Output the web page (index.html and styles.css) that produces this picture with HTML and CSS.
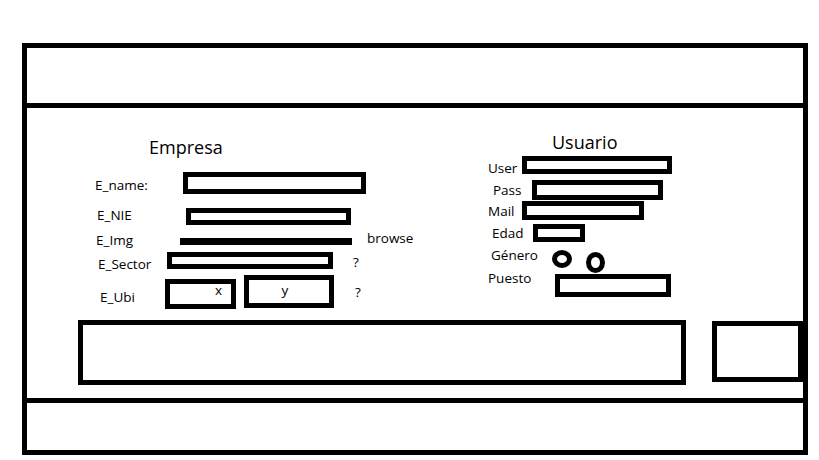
FILE: index.html
```html
<!DOCTYPE html>
<html lang="es">
<head>
<meta charset="utf-8">
<title>Registro</title>
<link rel="stylesheet" href="styles.css">
</head>
<body>
<div class="page">
  <header class="top"></header>
  <main class="main">
    <div class="forms">
      <section class="col col-left">
        <h2 class="title t-empresa">Empresa</h2>
        <div class="row r-name"><span class="label l-name">E_name:</span><span class="box f-name"></span></div>
        <div class="row r-nie"><span class="label l-nie">E_NIE</span><span class="box f-nie"></span></div>
        <div class="row r-img"><span class="label l-img">E_Img</span><span class="bar"></span><span class="label browse">browse</span></div>
        <div class="row r-sector"><span class="label l-sector">E_Sector</span><span class="box f-sector"></span><span class="label q-sector">?</span></div>
        <div class="row r-ubi"><span class="label l-ubi">E_Ubi</span><span class="box f-x">x</span><span class="box f-y">y</span><span class="label q-ubi">?</span></div>
      </section>
      <section class="col col-right">
        <h2 class="title t-usuario">Usuario</h2>
        <div class="row r-user"><span class="label l-user">User</span><span class="box f-user"></span></div>
        <div class="row r-pass"><span class="label l-pass">Pass</span><span class="box f-pass"></span></div>
        <div class="row r-mail"><span class="label l-mail">Mail</span><span class="box f-mail"></span></div>
        <div class="row r-edad"><span class="label l-edad">Edad</span><span class="box f-edad"></span></div>
        <div class="row r-genero"><span class="label l-genero">Género</span><span class="box radio-a"></span><span class="box radio-b"></span></div>
        <div class="row r-puesto"><span class="label l-puesto">Puesto</span><span class="box f-puesto"></span></div>
      </section>
    </div>
    <div class="bottom">
      <div class="box area"></div>
      <div class="box side"></div>
    </div>
  </main>
  <footer class="foot"></footer>
</div>
</body>
</html>
```
FILE: styles.css
```css
html, body {
  margin: 0;
  padding: 0;
  background: #fff;
}
body {
  font-family: "Open Sans", "Noto Sans", sans-serif;
  color: #000;
}
.page {
  margin: 43px 0 0 22px;
  width: 786px;
}
.top {
  box-sizing: border-box;
  height: 65px;
  border: 5px solid #000;
}
.main {
  box-sizing: border-box;
  height: 290px;
  border-left: 5px solid #000;
  border-right: 5px solid #000;
  display: flex;
  flex-direction: column;
}
.foot {
  box-sizing: border-box;
  height: 57px;
  border: 5px solid #000;
}
.forms {
  display: flex;
  height: 212px;
}
.col-left { width: 393px; padding-top: 28px; }
.col-right { flex: 1; padding-top: 23px; }
.title {
  margin: 0;
  font-size: 18px;
  line-height: 22px;
  font-weight: normal;
}
.t-empresa { margin-left: 122px; height: 36px; }
.t-usuario { margin-left: 132px; height: 25px; }
.row {
  display: flex;
  align-items: flex-start;
}
.label {
  flex: none;
  font-size: 13.5px;
  line-height: 16px;
  white-space: nowrap;
}
.box {
  flex: none;
  box-sizing: border-box;
  border: 5px solid #000;
}
.bar {
  flex: none;
  width: 172px;
  height: 7px;
  margin-top: 8px;
  background: #000;
}

/* Empresa rows */
.r-name { height: 35px; }
.l-name { margin-left: 68px; width: 88px; margin-top: 5px; }
.f-name { width: 183px; height: 22px; }
.r-nie { height: 23px; }
.l-nie { margin-left: 70px; width: 89px; }
.f-nie { width: 165px; height: 17px; margin-top: 1px; }
.r-img { height: 22px; }
.l-img { margin-left: 69px; width: 84px; margin-top: 2px; }
.browse { margin-left: 15px; }
.r-sector { height: 23px; }
.l-sector { margin-left: 71px; width: 69px; margin-top: 4px; }
.f-sector { width: 166px; height: 17px; }
.q-sector { margin-left: 20px; margin-top: 2px; }
.r-ubi { height: 34px; }
.l-ubi { margin-left: 73px; width: 65px; margin-top: 14px; }
.f-x {
  width: 71px;
  height: 30px;
  margin-top: 4px;
  padding-right: 9px;
  text-align: right;
  font-size: 13.5px;
  line-height: 12px;
}
.f-y {
  margin-left: 8px;
  width: 90px;
  height: 33px;
  padding-top: 4px;
  padding-right: 8px;
  text-align: center;
  font-size: 13.5px;
  line-height: 12px;
}
.q-ubi { margin-left: 21px; margin-top: 9px; }

/* Usuario rows */
.r-user { height: 24px; }
.l-user { margin-left: 68px; width: 34px; margin-top: 4px; }
.f-user { width: 150px; height: 18px; }
.r-pass { height: 21px; }
.l-pass { margin-left: 73px; width: 39px; margin-top: 2px; }
.f-pass { width: 131px; height: 20px; }
.r-mail { height: 23px; }
.l-mail { margin-left: 68px; width: 34px; margin-top: 2px; }
.f-mail { width: 122px; height: 19px; }
.r-edad { height: 23px; }
.l-edad { margin-left: 72px; width: 41px; margin-top: 1px; }
.f-edad { width: 52px; height: 18px; }
.r-genero { height: 23px; }
.l-genero { margin-left: 71px; width: 61px; }
.radio-a { width: 20px; height: 18px; margin-top: 3px; border-radius: 50%; }
.radio-b { margin-left: 14px; width: 19px; height: 21px; margin-top: 5px; border-radius: 50%; }
.r-puesto { height: 27px; }
.l-puesto { margin-left: 68px; width: 67px; }
.f-puesto { width: 116px; height: 23px; margin-top: 4px; }

/* bottom row */
.bottom {
  display: flex;
  align-items: flex-start;
}
.area { margin-left: 51px; width: 608px; height: 65px; }
.side { margin-left: 26px; margin-top: 1px; width: 91px; height: 61px; }
```
